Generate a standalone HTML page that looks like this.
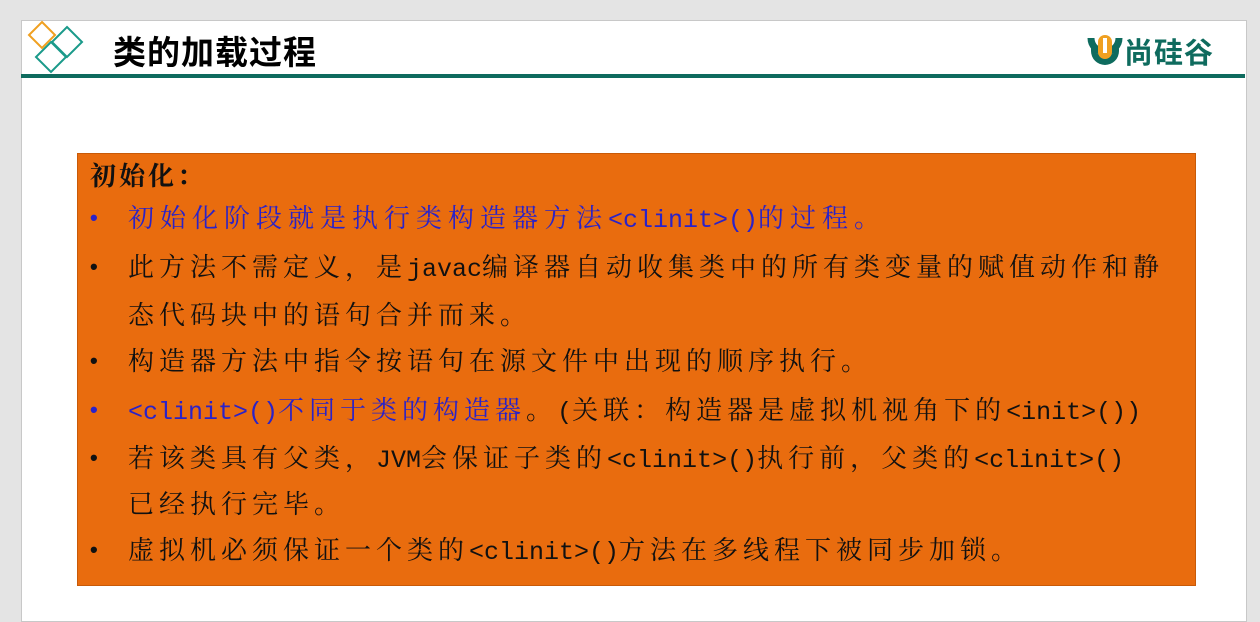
<!DOCTYPE html>
<html><head><meta charset="utf-8"><style>
body{margin:0;width:1260px;height:605px;background:#e4e4e4;position:relative;overflow:hidden}
.slide{position:absolute;left:21px;top:20px;width:1224px;height:600px;background:#fff;border:1px solid #c8c8c8}
.bar{position:absolute;left:21px;top:74px;width:1224px;height:4px;background:#0e6b5e}
.title{position:absolute;left:113px;top:26px;font:bold 33px "Liberation Sans","Noto Sans CJK SC",sans-serif;color:#000;letter-spacing:1px}
.box{position:absolute;left:77px;top:153px;width:1117px;height:431px;background:#e96c0e;border:1px solid #c85a08}
.l{position:absolute;left:128px;font:26px "Liberation Serif","Noto Serif CJK SC",serif;letter-spacing:5px;color:#111;white-space:nowrap;line-height:30px}
.m{font:25px "Liberation Mono",monospace;letter-spacing:0}
.b{position:absolute;left:90px;font:bold 22px "Liberation Sans",sans-serif;color:#111}
.blue{color:#2a22c8}
</style></head><body>
<div class="slide"></div>
<div class="bar"></div>
<svg style="position:absolute;left:24px;top:18px" width="66" height="60">
<path d="M18 4 L31 17 L18 30 L5 17Z" fill="none" stroke="#f0a020" stroke-width="2"/>
<path d="M43 9 L58 24 L43 39 L28 24Z" fill="none" stroke="#1a9a8a" stroke-width="2"/>
<path d="M27 24 L42 39 L27 54 L12 39Z" fill="none" stroke="#1a9a8a" stroke-width="2"/>
</svg>
<div class="title">类的加载过程</div>
<svg style="position:absolute;left:1086px;top:32px" width="38" height="38">
<path d="M5 10 A14 14 0 0 0 33 10 L33 19 A14 14 0 0 1 5 19Z" fill="#0e6b5e"/>
<path d="M4 8 A15 15 0 0 0 34 8 A15 15 0 0 0 4 8" fill="none" stroke="#0e6b5e" stroke-width="0"/>
<path d="M5 6 A14 14 0 0 0 33 6" fill="none" stroke="#0e6b5e" stroke-width="7"/>
<rect x="12" y="3" width="14" height="24" rx="7" fill="#f0a020"/>
<rect x="17" y="6" width="4" height="15" fill="#fff"/>
</svg>
<div style="position:absolute;left:1124px;top:30px;font:bold 29px 'Noto Sans CJK SC',sans-serif;color:#0e6b5e;letter-spacing:1px">尚硅谷</div>
<div class="box"></div>
<div class="l" style="left:90px;top:162px;letter-spacing:3px;font-weight:bold">初始化：</div>
<div class="b blue" style="top:205px">•</div><div class="l blue" style="top:204px;letter-spacing:6px">初始化阶段就是执行类构造器方法<span class="m">&lt;clinit&gt;()</span>的过程。</div>
<div class="b" style="top:254px">•</div><div class="l" style="top:253px">此方法不需定义，是<span class="m">javac</span>编译器自动收集类中的所有类变量的赋值动作和静</div>
<div class="l" style="top:301px">态代码块中的语句合并而来。</div>
<div class="b" style="top:348px">•</div><div class="l" style="top:347px">构造器方法中指令按语句在源文件中出现的顺序执行。</div>
<div class="b blue" style="top:397px">•</div><div class="l" style="top:396px"><span class="blue"><span class="m">&lt;clinit&gt;()</span>不同于类的构造器</span>。<span class="m">(</span>关联：构造器是虚拟机视角下的<span class="m">&lt;init&gt;())</span></div>
<div class="b" style="top:445px">•</div><div class="l" style="top:444px">若该类具有父类，<span class="m">JVM</span>会保证子类的<span class="m">&lt;clinit&gt;()</span>执行前，父类的<span class="m">&lt;clinit&gt;()</span></div>
<div class="l" style="top:490px">已经执行完毕。</div>
<div class="b" style="top:537px">•</div><div class="l" style="top:536px">虚拟机必须保证一个类的<span class="m">&lt;clinit&gt;()</span>方法在多线程下被同步加锁。</div>
</body></html>
